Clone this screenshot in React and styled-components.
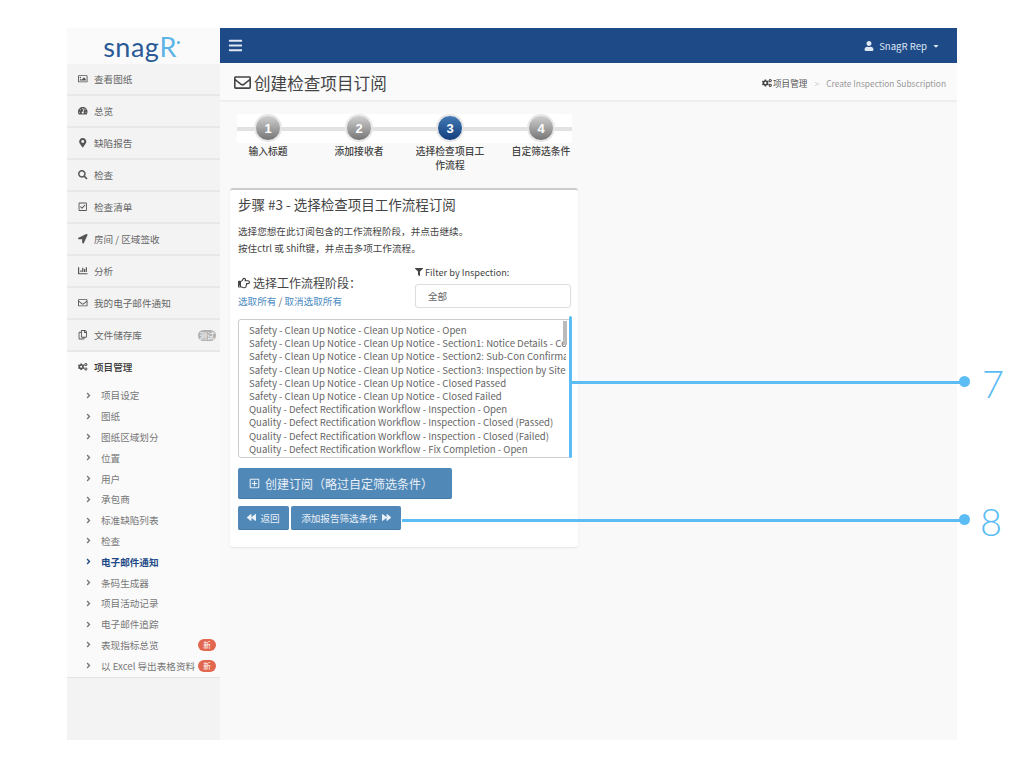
import React from 'react';
import styled, { createGlobalStyle } from 'styled-components';
import {
  FaRegImage,
  FaTachometerAlt,
  FaMapMarkerAlt,
  FaSearch,
  FaRegCheckSquare,
  FaLocationArrow,
  FaChartBar,
  FaRegEnvelope,
  FaRegCopy,
  FaCogs,
  FaAngleRight,
  FaBars,
  FaUser,
  FaCaretDown,
  FaFilter,
  FaRegHandPointRight,
  FaRegPlusSquare,
  FaBackward,
  FaForward,
} from 'react-icons/fa';

const navy = '#1e4a87';
const btnBlue = '#5088b8';
const callout = '#5cbdf5';
const cjk = '"Noto Sans CJK SC", "Noto Sans", sans-serif';

const GlobalStyle = createGlobalStyle`
  html, body {
    margin: 0;
    background: #fff;
    font-family: ${cjk};
  }
`;

const mainNav = [
  { icon: <FaRegImage />, label: '查看图纸' },
  { icon: <FaTachometerAlt />, label: '总览' },
  { icon: <FaMapMarkerAlt />, label: '缺陷报告' },
  { icon: <FaSearch />, label: '检查' },
  { icon: <FaRegCheckSquare />, label: '检查清单' },
  { icon: <FaLocationArrow />, label: '房间 / 区域签收' },
  { icon: <FaChartBar />, label: '分析' },
  { icon: <FaRegEnvelope />, label: '我的电子邮件通知' },
  { icon: <FaRegCopy />, label: '文件储存库', beta: '测试' },
  { icon: <FaCogs />, label: '项目管理', open: true },
];

const subNav = [
  { label: '项目设定' },
  { label: '图纸' },
  { label: '图纸区域划分' },
  { label: '位置' },
  { label: '用户' },
  { label: '承包商' },
  { label: '标准缺陷列表' },
  { label: '检查' },
  { label: '电子邮件通知', active: true },
  { label: '条码生成器' },
  { label: '项目活动记录' },
  { label: '电子邮件追踪' },
  { label: '表现指标总览', isNew: true },
  { label: '以 Excel 导出表格资料', isNew: true },
];

const steps = [
  { n: 1, label: '输入标题' },
  { n: 2, label: '添加接收者' },
  { n: 3, label: '选择检查项目工作流程', active: true },
  { n: 4, label: '自定筛选条件' },
];

const stages = [
  'Safety - Clean Up Notice - Clean Up Notice - Open',
  'Safety - Clean Up Notice - Clean Up Notice - Section1: Notice Details - Complete',
  'Safety - Clean Up Notice - Clean Up Notice - Section2: Sub-Con Confirmation',
  'Safety - Clean Up Notice - Clean Up Notice - Section3: Inspection by Site Team',
  'Safety - Clean Up Notice - Clean Up Notice - Closed Passed',
  'Safety - Clean Up Notice - Clean Up Notice - Closed Failed',
  'Quality - Defect Rectification Workflow - Inspection - Open',
  'Quality - Defect Rectification Workflow - Inspection - Closed (Passed)',
  'Quality - Defect Rectification Workflow - Inspection - Closed (Failed)',
  'Quality - Defect Rectification Workflow - Fix Completion - Open',
];

export default function App() {
  return (
    <Page>
      <GlobalStyle />
      <Frame>
        <Sidebar>
          <Logo>
            snag<LogoR>R</LogoR>
            <LogoDot />
          </Logo>
          {mainNav.map((item) => (
            <NavItem key={item.label} $open={item.open}>
              <NavIcon>{item.icon}</NavIcon>
              {item.label}
              {item.beta && <Pill $grey>{item.beta}</Pill>}
            </NavItem>
          ))}
          <SubNav>
            {subNav.map((item) => (
              <SubItem key={item.label} $active={item.active}>
                <Chevron>
                  <FaAngleRight />
                </Chevron>
                {item.label}
                {item.isNew && <Pill>新</Pill>}
              </SubItem>
            ))}
          </SubNav>
        </Sidebar>

        <Main>
          <TopBar>
            <FaBars size={15} color="#dfe8f3" />
            <UserMenu>
              <FaUser size={10} />
              <span>SnagR Rep</span>
              <FaCaretDown size={8} />
            </UserMenu>
          </TopBar>

          <PageHeader>
            <PageTitle>
              <FaRegEnvelope size={17} />
              创建检查项目订阅
            </PageTitle>
            <Breadcrumb>
              <FaCogs size={10} color="#444" />
              <span>项目管理</span>
              <BreadcrumbSep>&gt;</BreadcrumbSep>
              <BreadcrumbCurrent>Create Inspection Subscription</BreadcrumbCurrent>
            </Breadcrumb>
          </PageHeader>

          <Content>
            <Stepper>
              <StepTrack />
              {steps.map((step) => (
                <Step key={step.n}>
                  <StepCircle $active={step.active}>{step.n}</StepCircle>
                  <StepLabel>{step.label}</StepLabel>
                </Step>
              ))}
            </Stepper>

            <Card>
              <CardTitle>步骤 #3 - 选择检查项目工作流程订阅</CardTitle>
              <Help>选择您想在此订阅包含的工作流程阶段，并点击继续。</Help>
              <Help>按住ctrl 或 shift键，并点击多项工作流程。</Help>

              <FilterRow>
                <div>
                  <StageHeading>
                    <FaRegHandPointRight size={12} />
                    选择工作流程阶段：
                  </StageHeading>
                  <Links>
                    <a>选取所有</a> / <a>取消选取所有</a>
                  </Links>
                </div>
                <FilterBox>
                  <FilterLabel>
                    <FaFilter size={8} />
                    Filter by Inspection:
                  </FilterLabel>
                  <SelectBox>全部</SelectBox>
                </FilterBox>
              </FilterRow>

              <ListBox>
                {stages.map((stage) => (
                  <ListRow key={stage}>{stage}</ListRow>
                ))}
                <ScrollThumb />
                <CalloutBar />
              </ListBox>

              <BigButton>
                <FaRegPlusSquare size={11} />
                创建订阅（略过自定筛选条件）
              </BigButton>

              <ButtonRow>
                <SmallButton $w={51}>
                  <FaBackward size={9} />
                  返回
                </SmallButton>
                <SmallButton $w={110}>
                  添加报告筛选条件
                  <FaForward size={9} />
                </SmallButton>
              </ButtonRow>
            </Card>
          </Content>
        </Main>

        <CalloutLine $top={353} $left={505} $w={393} />
        <CalloutDot $top={348} />
        <CalloutNumber $top={330}>7</CalloutNumber>
        <CalloutLine $top={491} $left={335} $w={563} />
        <CalloutDot $top={486} />
        <CalloutNumber $top={468} $left={913}>8</CalloutNumber>
      </Frame>
    </Page>
  );
}

const Page = styled.div`
  padding: 28px 0 0 67px;
  height: 740px;
  overflow: hidden;
`;

const Frame = styled.div`
  position: relative;
  width: 890px;
  height: 712px;
  display: flex;
`;

const Sidebar = styled.aside`
  width: 153px;
  flex: none;
  background: #f3f3f3;
`;

const Logo = styled.div`
  position: relative;
  height: 36px;
  background: #fafafa;
  display: flex;
  align-items: center;
  justify-content: center;
  font-family: 'Lato', sans-serif;
  font-size: 27px;
  letter-spacing: 0.5px;
  color: #2a5a97;
`;

const LogoR = styled.span`
  color: #5cb4e6;
`;

const LogoDot = styled.span`
  width: 3px;
  height: 3px;
  border-radius: 50%;
  margin: 0 4px 8px 0;
  background: #5cb4e6;
`;

const NavItem = styled.div`
  height: 30px;
  display: flex;
  align-items: center;
  box-sizing: content-box;
  font-size: 9.6px;
  font-weight: ${(p) => (p.$open ? 500 : 400)};
  color: ${(p) => (p.$open ? '#333' : '#666')};
  background: ${(p) => (p.$open ? '#fafafa' : '#f3f3f3')};
  border-bottom: ${(p) => (p.$open ? '0' : '2px solid #e8e8e8')};
  padding-bottom: ${(p) => (p.$open ? '2px' : '0')};
  padding-left: 11px;
  padding-right: 4px;
`;

const NavIcon = styled.span`
  width: 16px;
  display: flex;
  align-items: center;
  font-size: 9.5px;
  color: #555;
`;

const Pill = styled.span`
  margin-left: auto;
  width: 18px;
  height: ${(p) => (p.$grey ? '11px' : '12px')};
  border-radius: 6px;
  display: flex;
  align-items: center;
  justify-content: center;
  font-size: 7.5px;
  color: #fff;
  background: ${(p) => (p.$grey ? '#b0b0b0' : '#e2674f')};
`;

const SubNav = styled.div`
  background: #fafafa;
  padding-top: 1px;
  padding-bottom: 1px;
  border-bottom: 1px solid #e4e4e4;
`;

const SubItem = styled.div`
  height: 20.8px;
  display: flex;
  align-items: center;
  padding: 0 4px 0 17px;
  font-size: 9.6px;
  font-weight: ${(p) => (p.$active ? 700 : 400)};
  color: ${(p) => (p.$active ? navy : '#777')};
`;

const Chevron = styled.span`
  width: 17px;
  display: flex;
  align-items: center;
  font-size: 9px;
`;

const Main = styled.main`
  flex: 1;
  background: #f9f9f9;
  display: flex;
  flex-direction: column;
`;

const TopBar = styled.header`
  height: 35px;
  background: ${navy};
  display: flex;
  align-items: center;
  justify-content: space-between;
  padding: 0 17px 0 8px;
`;

const UserMenu = styled.div`
  display: flex;
  align-items: center;
  gap: 5px;
  font-size: 9.6px;
  color: #dfe8f3;
`;

const PageHeader = styled.div`
  height: 35px;
  background: #fafafa;
  border-bottom: 2px solid #eee;
  display: flex;
  align-items: center;
  justify-content: space-between;
  padding: 2px 11px 0 14px;
  box-sizing: content-box;
`;

const PageTitle = styled.h1`
  margin: 0;
  display: flex;
  align-items: center;
  gap: 3px;
  font-size: 16.6px;
  font-weight: 400;
  color: #444;
`;

const Breadcrumb = styled.div`
  display: flex;
  align-items: center;
  gap: 1px;
  font-size: 8.6px;
  color: #555;
`;

const BreadcrumbSep = styled.span`
  margin: 0 6px;
  color: #ccc;
`;

const BreadcrumbCurrent = styled.span`
  color: #999;
  font-size: 8.4px;
`;

const Content = styled.div`
  padding: 12px 0 0 10px;
`;

const Stepper = styled.div`
  position: relative;
  width: 335px;
  height: 64px;
  margin-left: 7px;
  display: grid;
  grid-template-columns: repeat(4, 91px);
  transform-origin: left;
`;

const StepTrack = styled.div`
  position: absolute;
  left: 0;
  right: 0;
  top: 0;
  height: 29px;
  background:
    linear-gradient(#e2e2e2, #e2e2e2) center / 100% 4px no-repeat,
    #fff;
`;

const Step = styled.div`
  position: relative;
  display: flex;
  flex-direction: column;
  align-items: center;
  margin-left: -29px;
  width: 120px;
`;

const StepCircle = styled.div`
  width: 26px;
  height: 26px;
  margin-top: 1px;
  box-sizing: border-box;
  border-radius: 50%;
  border: 1px solid #e2e2e2;
  box-shadow: 0 0 0 1px #e6e6e6;
  display: flex;
  align-items: center;
  justify-content: center;
  font-family: 'Liberation Sans', sans-serif;
  font-size: 13px;
  font-weight: 700;
  color: #fff;
  background: ${(p) =>
    p.$active
      ? 'linear-gradient(#4279b5, #133f7c)'
      : 'linear-gradient(#d0d0d0, #757575)'};
`;

const StepLabel = styled.div`
  width: 72px;
  margin-top: 3px;
  text-align: center;
  font-size: 9.8px;
  line-height: 14px;
  font-weight: 500;
  color: #444;
`;

const Card = styled.section`
  box-sizing: border-box;
  width: 348px;
  height: 359px;
  margin-top: 10px;
  padding: 4px 7px 0 8px;
  background: #fff;
  border-top: 2px solid #ccc;
  border-radius: 3px;
  box-shadow: 0 1px 2px rgba(0, 0, 0, 0.08);
`;

const CardTitle = styled.h2`
  margin: 0 0 9px;
  font-size: 13.5px;
  line-height: 20px;
  font-weight: 400;
  color: #444;
`;

const Help = styled.p`
  margin: 0;
  font-size: 9.6px;
  line-height: 17px;
  color: #444;
`;

const FilterRow = styled.div`
  display: flex;
  justify-content: space-between;
  align-items: flex-end;
  margin-top: 8px;
`;

const StageHeading = styled.div`
  display: flex;
  align-items: center;
  gap: 3px;
  font-size: 12px;
  line-height: 18px;
  color: #444;
`;

const Links = styled.div`
  font-size: 9.6px;
  line-height: 18px;
  color: #666;

  a {
    color: #4a8bc2;
  }
`;

const FilterBox = styled.div`
  width: 156px;
  margin-bottom: 2px;
`;

const FilterLabel = styled.div`
  display: flex;
  align-items: center;
  gap: 2px;
  font-size: 9.2px;
  line-height: 14px;
  margin-bottom: 5px;
  color: #444;
`;

const SelectBox = styled.div`
  box-sizing: border-box;
  height: 24px;
  padding-left: 12px;
  display: flex;
  align-items: center;
  font-size: 9.6px;
  color: #666;
  border: 1px solid #ddd;
  border-radius: 3px;
`;

const ListBox = styled.div`
  position: relative;
  box-sizing: border-box;
  height: 139px;
  margin-top: 9px;
  padding: 4px 0 0 10px;
  border: 1px solid #ccc;
  border-radius: 3px;
  overflow: visible;
`;

const ListRow = styled.div`
  height: 13.2px;
  line-height: 13.2px;
  font-size: 9.6px;
  color: #666;
  white-space: nowrap;
  overflow: hidden;
  width: 317px;
`;

const ScrollThumb = styled.div`
  position: absolute;
  top: 1px;
  right: 3px;
  width: 4px;
  height: 24px;
  background: #bbb;
`;

const CalloutBar = styled.div`
  position: absolute;
  top: -4px;
  bottom: -1px;
  right: -2px;
  width: 3px;
  border-radius: 2px;
  background: ${callout};
`;

const BigButton = styled.button`
  width: 214px;
  height: 31px;
  margin-top: 10px;
  display: flex;
  align-items: center;
  gap: 5px;
  padding: 0 0 0 11px;
  border: 0;
  border-bottom: 1px solid #437aa8;
  border-radius: 2px;
  background: ${btnBlue};
  color: #e9f0f7;
  font-family: ${cjk};
  font-size: 12px;
`;

const ButtonRow = styled.div`
  display: flex;
  gap: 2px;
  margin-top: 7px;
`;

const SmallButton = styled.button`
  width: ${(p) => p.$w}px;
  height: 24px;
  display: flex;
  align-items: center;
  justify-content: center;
  gap: 4px;
  padding: 0;
  border: 0;
  border-bottom: 1px solid #437aa8;
  border-radius: 2px;
  background: ${btnBlue};
  color: #e9f0f7;
  font-family: ${cjk};
  font-size: 9.6px;
`;

const CalloutLine = styled.div`
  position: absolute;
  top: ${(p) => p.$top}px;
  left: ${(p) => p.$left}px;
  width: ${(p) => p.$w}px;
  height: 3px;
  background: ${callout};
`;

const CalloutDot = styled.div`
  position: absolute;
  top: ${(p) => p.$top}px;
  left: 892px;
  width: 11px;
  height: 11px;
  border-radius: 50%;
  background: ${callout};
`;

const CalloutNumber = styled.div`
  position: absolute;
  top: ${(p) => p.$top}px;
  left: ${(p) => p.$left || 915}px;
  font-family: 'Lato', sans-serif;
  font-weight: 300;
  font-size: 38px;
  line-height: 50px;
  color: ${callout};
`;
